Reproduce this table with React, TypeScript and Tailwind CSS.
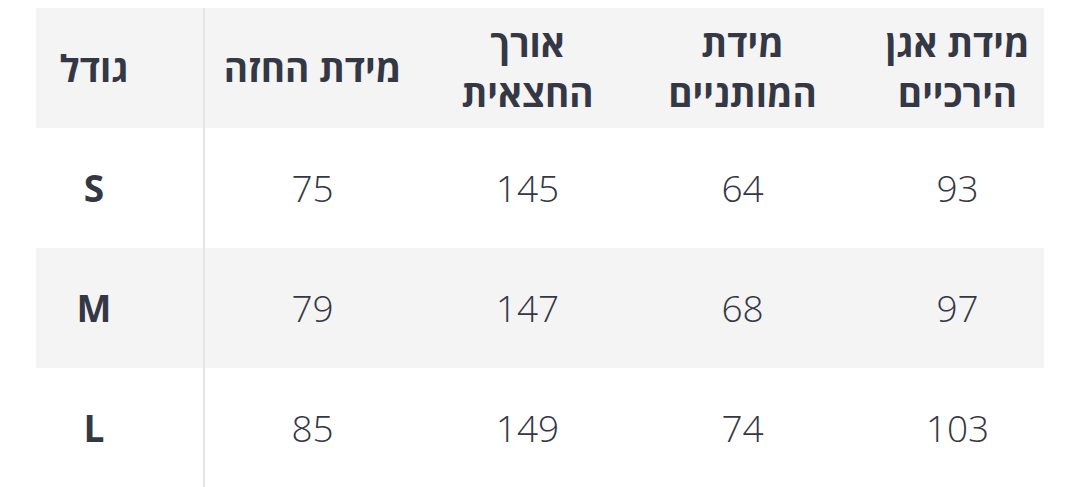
import React from "react";

const headers: React.ReactNode[] = [
  "מידת החזה",
  <>אורך<br />החצאית</>,
  <>מידת<br />המותניים</>,
  <>מידת אגן<br />הירכיים</>,
];

const rows = [
  { size: "S", vals: ["75", "145", "64", "93"] },
  { size: "M", vals: ["79", "147", "68", "97"] },
  { size: "L", vals: ["85", "149", "74", "103"] },
];

export default function App() {
  return (
    <div
      className="w-[1080px] h-[487px] bg-white pt-[8px] pl-[36px] overflow-hidden text-[#343844]"
      style={{ fontFamily: '"Open Sans", "Noto Sans", "DejaVu Sans", sans-serif' }}
    >
      <div className="w-[1008px] overflow-hidden">
        <div className="grid grid-cols-[167px_2px_215px_215px_215px_215px] w-[1031px] text-[37px] leading-[50px]">
          {/* header */}
          <div className="h-[120px] bg-[#f4f4f4] flex items-center justify-center pr-[51px] font-bold" dir="rtl">
            גודל
          </div>
          <div className="row-span-4 bg-[#e5e5e5]" />
          {headers.map((h, i) => (
            <div
              key={i}
              dir="rtl"
              className="h-[120px] bg-[#f4f4f4] flex items-center justify-center text-center font-bold"
            >
              <div>{h}</div>
            </div>
          ))}
          {rows.map((r, ri) => {
            const bg = ri === 1 ? "bg-[#f4f4f4]" : "bg-white";
            return (
              <React.Fragment key={r.size}>
                <div className={`h-[120px] ${bg} flex items-center justify-center pr-[51px] font-bold`}>
                  {r.size}
                </div>
                {r.vals.map((v, vi) => (
                  <div key={vi} className={`h-[120px] ${bg} flex items-center justify-center font-light`}>
                    {v}
                  </div>
                ))}
              </React.Fragment>
            );
          })}
        </div>
      </div>
    </div>
  );
}
